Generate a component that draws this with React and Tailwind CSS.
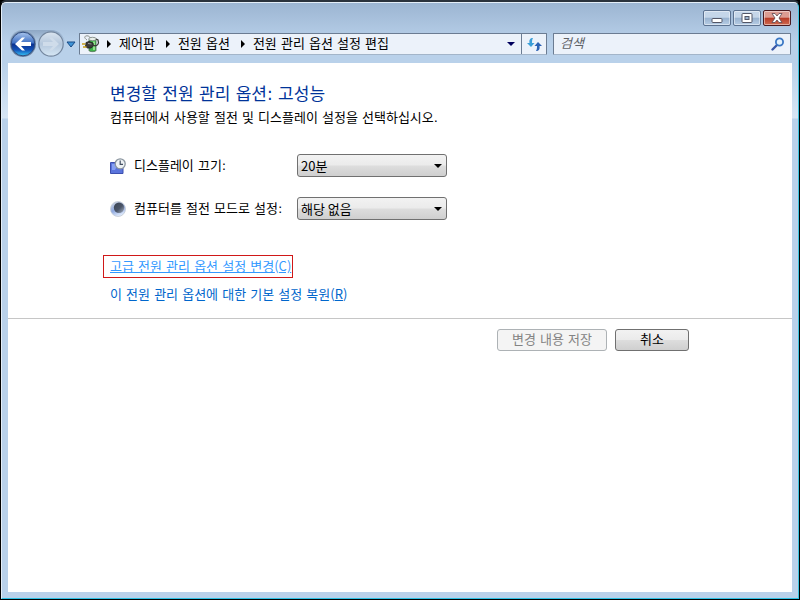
import React from "react";

const ui = "font-['DejaVu_Sans','Noto_Sans_CJK_KR',sans-serif]";
const latin = "font-['Noto_Sans_CJK_KR',sans-serif]";

function Crumb({ children }) {
  return (
    <li className="flex items-center">
      <svg className="mr-[7px] h-2 w-[6px]" viewBox="0 0 6 8" aria-hidden="true">
        <path d="M1 0L5 4L1 8Z" fill="#000" />
      </svg>
      <a href="#" className="mr-[10px] whitespace-nowrap text-black">{children}</a>
    </li>
  );
}

function PowerIcon() {
  return (
    <svg className="h-[18px] w-[18px] shrink-0" viewBox="0 0 18 18" aria-hidden="true">
      <path d="M7 4.500V15.500C7 17 14 17 14 15.500V4.500Z" fill="#3fb34a" stroke="#4f6a52" strokeWidth=".8" />
      <ellipse cx="10.500" cy="4" rx="3.800" ry="1.700" fill="#e9efe9" stroke="#76807a" strokeWidth=".8" />
      <path d="M11 6.500H13V15H11Z" fill="#8fe08a" />
      <path d="M5 5C2 3 2 1 5 .8C7 .8 8 2 8 3" fill="none" stroke="#8a8f8a" />
      <path d="M4 7.500L7 6.500L11 8L11.500 11L9 13H5.500L3.500 11.500Z" fill="#3a3a3a" stroke="#1c1c1c" strokeWidth=".8" />
      <path d="M6 8.500L9.500 9" stroke="#9a9a9a" />
      <path d="M0 9H3.500M1 12H4.500" stroke="#c8a01b" strokeWidth="1.500" />
      <path d="M11.500 10.500C15 11.500 17.500 9 16 5L14 4" fill="none" stroke="#3a3a3a" strokeWidth="1.300" />
    </svg>
  );
}

function NavButtons() {
  return (
    <div className="flex items-center">
      <div className="flex rounded-full bg-[linear-gradient(#8ea7c4,#b9d1ea_50%)]">
        <button aria-label="뒤로" className="size-7">
          <svg viewBox="0 0 28 28" className="size-7">
            <defs>
              <linearGradient id="back" x1="0" y1="0" x2="0" y2="1">
                <stop offset="0" stopColor="#a8c4ec" />
                <stop offset=".46" stopColor="#3d6fc4" />
                <stop offset=".5" stopColor="#0b318f" />
                <stop offset=".75" stopColor="#1252b8" />
                <stop offset="1" stopColor="#36c4f6" />
              </linearGradient>
            </defs>
            <circle cx="14" cy="14" r="13" fill="#7288a6" />
            <circle cx="14" cy="14" r="11.800" fill="url(#back)" stroke="#304d80" />
            <path d="M6 14L13 7.500H16L12 12H22V16H12L16 20.500H13Z" fill="#fff" />
          </svg>
        </button>
        <button aria-label="앞으로" disabled className="size-7">
          <svg viewBox="0 0 28 28" className="size-7">
            <defs>
              <linearGradient id="forward" x1="0" y1="0" x2="0" y2="1">
                <stop offset="0" stopColor="#dbe5f0" />
                <stop offset=".5" stopColor="#b4c7dc" />
                <stop offset="1" stopColor="#d6e7f5" />
              </linearGradient>
            </defs>
            <circle cx="14" cy="14" r="12.200" fill="url(#forward)" stroke="#74879f" strokeWidth="1.200" />
            <path d="M22 14L15 7.500H12L16 12H6V16H16L12 20.500H15Z" fill="#cfdcea" />
          </svg>
        </button>
      </div>
      <button aria-label="최근 페이지" className="ml-px w-[10px]">
        <svg viewBox="0 0 10 7" className="h-[7px] w-[10px]">
          <path d="M1 1H9L5 6Z" fill="#3f95d8" stroke="#174a85" />
        </svg>
      </button>
    </div>
  );
}

const caption =
  "flex h-4 w-7 items-center justify-center rounded-[2px] border shadow-[inset_0_0_0_1px_rgba(255,255,255,0.45)]";
const glass = "border-[#5c7290] bg-[linear-gradient(#c5d6e9_45%,#98b2cf_50%,#b7cde5)]";

function CaptionButtons() {
  return (
    <div className="flex justify-end gap-[2px]">
      <button aria-label="최소화" className={`${caption} ${glass}`}>
        <svg viewBox="0 0 12 10" className="h-[10px] w-3">
          <rect x="1" y="5.500" width="10" height="4" rx="1" fill="#fff" stroke="#535666" />
        </svg>
      </button>
      <button aria-label="최대화" className={`${caption} ${glass}`}>
        <svg viewBox="0 0 12 10" className="h-[10px] w-3">
          <rect x="1" y=".5" width="10" height="9" rx="1" fill="#fff" stroke="#535666" />
          <rect x="4" y="3.500" width="4" height="3" fill="#9db5d0" stroke="#535666" />
        </svg>
      </button>
      <button
        aria-label="닫기"
        className={`${caption} border-[#4a1a20] bg-[linear-gradient(#dd9c92_45%,#b83a26_50%,#cf6a50)]`}
      >
        <svg viewBox="0 0 12 10" className="h-[10px] w-3">
          <path d="M1 .5H4L6 3L8 .5H11L8 5L11 9.500H8L6 7L4 9.500H1L4 5Z" fill="#fff" stroke="#5a4850" strokeWidth=".8" />
        </svg>
      </button>
    </div>
  );
}

const field = "flex h-[22px] rounded-[1px] border border-[#6b7c92] border-b-[#a3b5c9] bg-[#ecf2fa]";

function AddressBar() {
  return (
    <nav className={`${field} min-w-0 flex-1`}>
      <div className="flex min-w-0 flex-1 items-center pl-[2px]">
        <PowerIcon />
        <ol className="ml-[6px] flex">
          <Crumb>제어판</Crumb>
          <Crumb>전원 옵션</Crumb>
          <Crumb>전원 관리 옵션 설정 편집</Crumb>
        </ol>
      </div>
      <button aria-label="이전 위치" className="flex w-5 items-center justify-center">
        <svg viewBox="0 0 8 4" className="h-1 w-2">
          <path d="M0 0H8L4 4Z" fill="#00005c" />
        </svg>
      </button>
      <button aria-label="새로 고침" className="flex w-[25px] items-center justify-center border-l border-[#6b7c92]">
        <svg viewBox="0 0 15 13" className="h-[13px] w-[15px]">
          <path d="M6 0C3 0 2 2 2.500 5H0L4 9L7.500 5H5C5 3 5 2 6 0Z" fill="#3b9fd8" />
          <path d="M9 13C12 13 13 11 12.500 8H15L11 4L7.500 8H10C10 10 10 11 9 13Z" fill="#2b62b5" />
        </svg>
      </button>
    </nav>
  );
}

function SearchBox() {
  return (
    <label className={`${field} w-[238px] items-center pr-[5px] pl-[6px]`}>
      <input
        type="search"
        aria-label="검색"
        placeholder="검색"
        className="min-w-0 flex-1 bg-transparent italic outline-none placeholder:text-[#5c6066]"
      />
      <svg viewBox="0 0 14 14" className="size-[14px]" aria-hidden="true">
        <path d="M1.500 12.500L6 8" stroke="#3a58a8" strokeWidth="2.400" strokeLinecap="round" />
        <circle cx="8.500" cy="5" r="3.600" fill="#e4f2fc" stroke="#3a77c4" strokeWidth="1.800" />
      </svg>
    </label>
  );
}

function DisplayIcon() {
  return (
    <svg viewBox="0 0 16 16" className="size-4" aria-hidden="true">
      <path d="M.5 4.500H13V15.500H.5Z" fill="#5a74dc" stroke="#3c4fae" />
      <path d="M2 6H8L5 12H2Z" fill="#86a0f2" />
      <circle cx="10.200" cy="5.800" r="5" fill="#edf1f3" stroke="#8a959f" strokeWidth="1.300" />
      <path d="M10.200 2.500V6.300H13" fill="none" stroke="#435062" strokeWidth="1.200" />
    </svg>
  );
}

function SleepIcon() {
  return (
    <svg viewBox="0 0 16 16" className="size-4" aria-hidden="true">
      <defs>
        <linearGradient id="moon" x1="0" y1="0" x2=".4" y2="1">
          <stop offset="0" stopColor="#d5d9de" />
          <stop offset=".6" stopColor="#8ea8df" />
          <stop offset="1" stopColor="#dbe7fb" />
        </linearGradient>
        <linearGradient id="shade" x1="0" y1="0" x2="1" y2="1">
          <stop offset="0" stopColor="#3a4250" />
          <stop offset=".55" stopColor="#4a5568" />
          <stop offset="1" stopColor="#a9b4c6" />
        </linearGradient>
      </defs>
      <circle cx="8" cy="8" r="7.500" fill="url(#moon)" stroke="#c3cad4" strokeWidth=".8" />
      <circle cx="9" cy="6.800" r="5.200" fill="url(#shade)" />
    </svg>
  );
}

function Setting({ id, icon, label, options }) {
  return (
    <div className="flex items-center">
      {icon}
      <label htmlFor={id} className="ml-2 w-[163px] whitespace-nowrap">{label}</label>
      <div className="relative">
        <select
          id={id}
          className={`${latin} block h-[23px] w-[150px] appearance-none rounded-[3px] border border-[#707070] bg-[linear-gradient(#f2f2f2,#ebebeb_48%,#dddddd_52%,#cfcfcf)] pl-[3px]`}
        >
          {options.map((o) => (
            <option key={o}>{o}</option>
          ))}
        </select>
        <svg viewBox="0 0 8 4" className="pointer-events-none absolute top-[10px] right-[5px] h-1 w-2" aria-hidden="true">
          <path d="M0 0H8L4 4Z" fill="#000" />
        </svg>
      </div>
    </div>
  );
}

export default function App() {
  return (
    <div className="min-h-screen bg-black">
      <div className={`${ui} flex min-h-screen flex-col rounded-t-[6px] border border-t-2 border-black border-t-[#2a323c] text-[13px] leading-5 text-black`}>
        <div className="flex flex-1 flex-col rounded-t-[5px] border border-[#e4eef8] border-r-[#3fc4e0] border-b-[#2cc0e4] bg-[linear-gradient(#9cb5d2,#b9d1ea_40px,#b9d1ea_60px,#d6e5f4_115px,#b9d1ea_116px)] px-[6px] pb-[6px]">
          <header className="px-px pt-[7px] pb-[5px]">
            <CaptionButtons />
            <div className="mt-1 flex items-center gap-[6px]">
              <div className="flex min-w-0 flex-1 items-center gap-[3px]">
                <NavButtons />
                <AddressBar />
              </div>
              <SearchBox />
            </div>
          </header>

          <main className="flex-1 bg-white">
            <div className="px-[95px] pt-[19px]">
              <div className="pl-[7px]">
                <h1 className="text-[17px] leading-6 text-[#003399]">변경할 전원 관리 옵션: 고성능</h1>
                <p className="mt-[2px]">컴퓨터에서 사용할 절전 및 디스플레이 설정을 선택하십시오.</p>
                <form className="mt-[26px] flex flex-col gap-5">
                  <Setting id="display" icon={<DisplayIcon />} label="디스플레이 끄기:" options={["20분", "해당 없음"]} />
                  <Setting id="sleep" icon={<SleepIcon />} label="컴퓨터를 절전 모드로 설정:" options={["해당 없음", "20분"]} />
                </form>
              </div>
              <div className="mt-[35px] flex flex-col items-start">
                <a href="#" className="flex h-[23px] items-center border border-[#d01818] px-[6px] pr-px whitespace-nowrap text-[#3399ff] underline">
                  <span>고급 전원 관리 옵션 설정 변경<span className={latin}>(C)</span></span>
                </a>
                <a href="#" className="mt-[6px] ml-[7px] whitespace-nowrap text-[#0066cc]">
                  이 전원 관리 옵션에 대한 기본 설정 복원<span className={latin}>(<u>R</u>)</span>
                </a>
              </div>
            </div>
            <footer className="mt-[13px] flex justify-end gap-2 border-t border-[#c6c6c6] px-[103px] pt-[10px]">
              <button disabled className="h-[22px] w-[110px] rounded-[3px] border border-[#adb2b5] bg-[#f4f4f4] text-[#838383]">
                변경 내용 저장
              </button>
              <button className="h-[22px] w-[74px] rounded-[3px] border border-[#707070] bg-[linear-gradient(#f2f2f2,#ebebeb_48%,#dddddd_52%,#cfcfcf)]">
                취소
              </button>
            </footer>
          </main>
        </div>
      </div>
    </div>
  );
}
